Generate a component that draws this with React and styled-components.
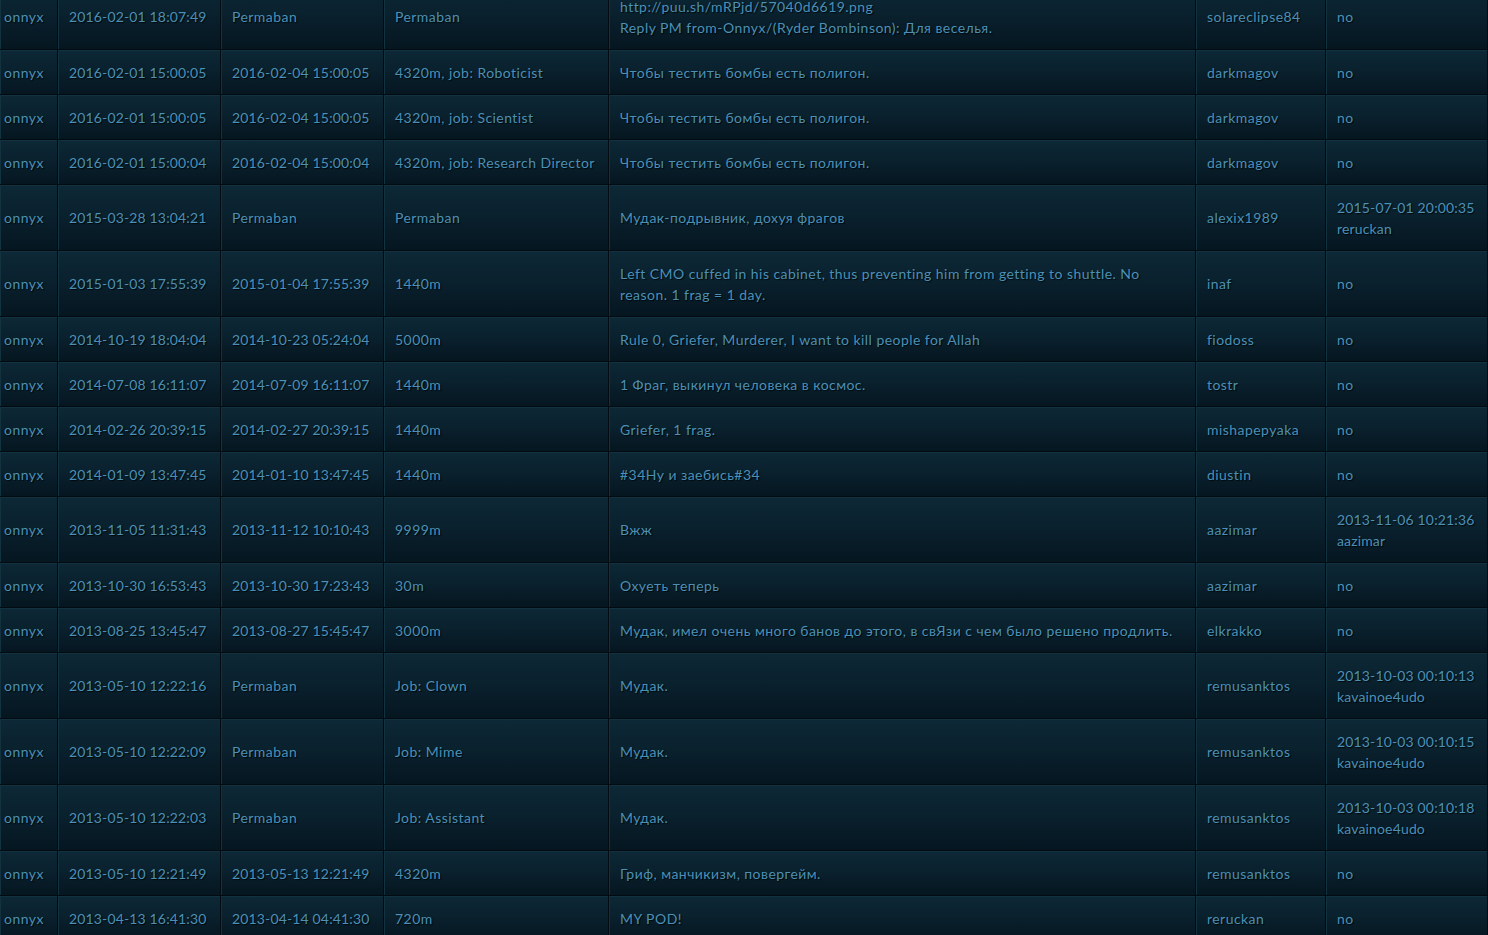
import React from "react";
import styled, { createGlobalStyle } from "styled-components";

const Global = createGlobalStyle`
  html, body { margin: 0; padding: 0; background: #061620; overflow: hidden; }
  body { font-family: Lato, "Open Sans", "DejaVu Sans", sans-serif; }
`;

const Page = styled.div`
  width: 1488px;
  height: 935px;
  overflow: hidden;
  background: #061620;
`;

const Table = styled.table`
  margin-top: -16px;
  width: 1488px;
  table-layout: fixed;
  border-collapse: separate;
  border-spacing: 0;
`;

const Col = styled.col`
  width: ${(p) => p.$w}px;
`;

const Cell = styled.td`
  padding: 11.5px 11px 11.5px ${(p) => (p.$first ? 4 : 11)}px;
  line-height: 21px;
  font-size: 14px;
  letter-spacing: ${(p) => (p.$tight ? "0.15px" : "0.45px")};
  color: #4c90b6;
  text-shadow: 1px 1px 1px rgba(0, 0, 0, 0.75);
  vertical-align: middle;
  white-space: ${(p) => (p.$wrap ? "pre-line" : "pre")};
  background: linear-gradient(to bottom, #0d2836 0%, #0a212e 45%, #051620 100%);
  border-right: 1px solid #020b11;
  border-bottom: 1px solid #020b11;
  box-shadow: inset 1px 1px 0 #12323f;
  overflow: hidden;
`;

const widths = [58, 163, 163, 225, 587, 130, 162];

const rows = [
  ["onnyx", "2016-02-01 18:07:49", "Permaban", "Permaban", "http://puu.sh/mRPjd/57040d6619.png\nReply PM from-Onnyx/(Ryder Bombinson): Для веселья.", "solareclipse84", "no"],
  ["onnyx", "2016-02-01 15:00:05", "2016-02-04 15:00:05", "4320m, job: Roboticist", "Чтобы тестить бомбы есть полигон.", "darkmagov", "no"],
  ["onnyx", "2016-02-01 15:00:05", "2016-02-04 15:00:05", "4320m, job: Scientist", "Чтобы тестить бомбы есть полигон.", "darkmagov", "no"],
  ["onnyx", "2016-02-01 15:00:04", "2016-02-04 15:00:04", "4320m, job: Research Director", "Чтобы тестить бомбы есть полигон.", "darkmagov", "no"],
  ["onnyx", "2015-03-28 13:04:21", "Permaban", "Permaban", "Мудак-подрывник, дохуя фрагов", "alexix1989", "2015-07-01 20:00:35\nreruckan"],
  ["onnyx", "2015-01-03 17:55:39", "2015-01-04 17:55:39", "1440m", "Left CMO cuffed in his cabinet, thus preventing him from getting to shuttle. No reason. 1 frag = 1 day.", "inaf", "no"],
  ["onnyx", "2014-10-19 18:04:04", "2014-10-23 05:24:04", "5000m", "Rule 0, Griefer, Murderer, I want to kill people for Allah", "fiodoss", "no"],
  ["onnyx", "2014-07-08 16:11:07", "2014-07-09 16:11:07", "1440m", "1 Фраг, выкинул человека в космос.", "tostr", "no"],
  ["onnyx", "2014-02-26 20:39:15", "2014-02-27 20:39:15", "1440m", "Griefer, 1 frag.", "mishapepyaka", "no"],
  ["onnyx", "2014-01-09 13:47:45", "2014-01-10 13:47:45", "1440m", "#34Ну и заебись#34", "diustin", "no"],
  ["onnyx", "2013-11-05 11:31:43", "2013-11-12 10:10:43", "9999m", "Вжж", "aazimar", "2013-11-06 10:21:36\naazimar"],
  ["onnyx", "2013-10-30 16:53:43", "2013-10-30 17:23:43", "30m", "Охуеть теперь", "aazimar", "no"],
  ["onnyx", "2013-08-25 13:45:47", "2013-08-27 15:45:47", "3000m", "Мудак, имел очень много банов до этого, в свЯзи с чем было решено продлить.", "elkrakko", "no"],
  ["onnyx", "2013-05-10 12:22:16", "Permaban", "Job: Clown", "Мудак.", "remusanktos", "2013-10-03 00:10:13\nkavainoe4udo"],
  ["onnyx", "2013-05-10 12:22:09", "Permaban", "Job: Mime", "Мудак.", "remusanktos", "2013-10-03 00:10:15\nkavainoe4udo"],
  ["onnyx", "2013-05-10 12:22:03", "Permaban", "Job: Assistant", "Мудак.", "remusanktos", "2013-10-03 00:10:18\nkavainoe4udo"],
  ["onnyx", "2013-05-10 12:21:49", "2013-05-13 12:21:49", "4320m", "Гриф, манчикизм, повергейм.", "remusanktos", "no"],
  ["onnyx", "2013-04-13 16:41:30", "2013-04-14 04:41:30", "720m", "MY POD!", "reruckan", "no"],
];

const isDate = (s) => /^\d{4}-\d{2}-\d{2} /.test(s);

export default function App() {
  return (
    <Page>
      <Global />
      <Table>
        <colgroup>
          {widths.map((w, i) => (
            <Col key={i} $w={w} />
          ))}
        </colgroup>
        <tbody>
          {rows.map((r, i) => (
            <tr key={i}>
              {r.map((c, j) => (
                <Cell key={j} $first={j === 0} $wrap={j === 4} $tight={isDate(c)}>
                  {c}
                </Cell>
              ))}
            </tr>
          ))}
        </tbody>
      </Table>
    </Page>
  );
}
